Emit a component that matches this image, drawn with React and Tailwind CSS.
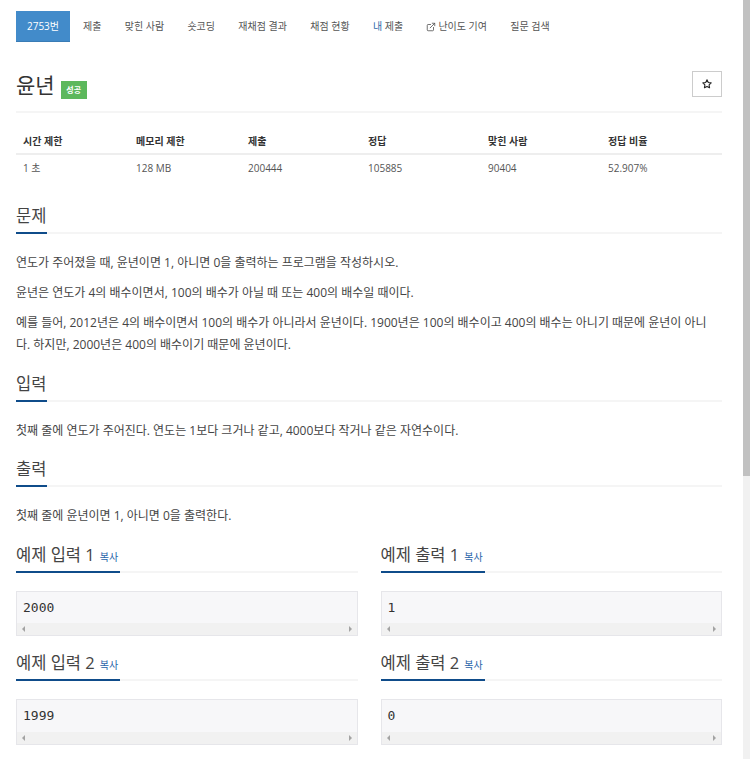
import React from 'react';
import { FiExternalLink, FiStar } from 'react-icons/fi';

const fontStack = "font-['Open_Sans','Noto_Sans_CJK_KR',sans-serif]";

const tabs = ['제출', '맞힌 사람', '숏코딩', '재채점 결과', '채점 현황'];

const stats = [
  { label: '시간 제한', value: '1 초', width: 'w-[113px]' },
  { label: '메모리 제한', value: '128 MB', width: 'w-[112px]' },
  { label: '제출', value: '200444', width: 'w-[120px]' },
  { label: '정답', value: '105885', width: 'w-[120px]' },
  { label: '맞힌 사람', value: '90404', width: 'w-[120px]' },
  { label: '정답 비율', value: '52.907%', width: 'flex-1' },
];

const SectionTitle = ({ children }) => (
  <div className="border-b-2 border-[#f5f5f5] h-[26px] text-[16.5px] leading-[16px] text-[#444]">
    <span className="inline-block w-[31px] h-[26px] whitespace-nowrap border-b-2 border-[#0f4c8a]">{children}</span>
  </div>
);

const Sample = ({ title, value, boxHeight }) => (
  <div className="flex-1 min-w-0">
    <div className="flex border-b-2 border-[#f5f5f5] h-[28px]">
      <div className="flex items-baseline w-[104px] h-[28px] whitespace-nowrap border-b-2 border-[#0f4c8a] text-[16.5px] leading-[20px] text-[#444]">
        {title}
        <span className="ml-[5px] text-[10px] text-[#1f62a8]">복사</span>
      </div>
    </div>
    <div className={`mt-[18px] ${boxHeight} border border-[#e6e6ea] bg-[#f7f7f9] flex flex-col`}>
      <pre className="flex-1 px-[6px] pt-[8px] font-['DejaVu_Sans_Mono',monospace] text-[13px] leading-[16px] text-[#333]">{value}</pre>
      <div className="h-[12px] bg-[#f1f1f1] flex items-center justify-between px-[5px]">
        <span className="border-y-[3px] border-r-[3px] border-y-transparent border-r-[#a3a3a3]" />
        <span className="border-y-[3px] border-l-[3px] border-y-transparent border-l-[#a3a3a3]" />
      </div>
    </div>
  </div>
);

const App = () => {
  return (
    <div className={`flex h-[759px] w-[750px] overflow-hidden bg-white text-[#333] ${fontStack}`}>
      <div className="w-[743px] px-[16px] pt-[11px]">
        {/* tabs */}
        <div className="w-[706px] flex items-center h-[31px] text-[10px] text-[#555]">
          <div className="w-[54px] h-[31px] flex items-center justify-center bg-[#428bca] text-white border-b border-[#3a7cb5]">2753번</div>
          <div className="ml-[13px] flex gap-[23.3px]">
            {tabs.map((tab) => (
              <span key={tab}>{tab}</span>
            ))}
            <span><span className="text-[#2c6aa8]">내</span> 제출</span>
            <span className="flex items-center">
              <FiExternalLink className="w-[10px] h-[10px] mr-[2px]" />
              난이도 기여
            </span>
            <span>질문 검색</span>
          </div>
        </div>

        {/* title */}
        <div className="w-[706px] mt-[30px] h-[41px] border-b-2 border-[#f5f5f5] flex justify-between">
          <div className="flex items-start">
            <h1 className="text-[21px] leading-[28px] font-normal -mt-[1px]">윤년</h1>
            <span className="ml-[6px] mt-[9px] w-[26px] h-[18px] flex items-center justify-center bg-[#5cb85c] text-white text-[8px] font-bold">성공</span>
          </div>
          <button className="w-[30px] h-[26px] -mt-[1px] border border-[#ccc] flex items-center justify-center text-[#222]">
            <FiStar className="w-[10px] h-[10px]" strokeWidth={2.6} />
          </button>
        </div>

        {/* stats */}
        <div className="w-[706px] mt-[16px]">
          <div className="flex h-[26px] border-b-2 border-[#eee] text-[10px] font-bold items-center">
            {stats.map((s) => (
              <div key={s.label} className={`${s.width} pl-[7px]`}>{s.label}</div>
            ))}
          </div>
          <div className="flex h-[26px] text-[10px] text-[#555] items-center">
            {stats.map((s) => (
              <div key={s.label} className={`${s.width} pl-[7px]`}>{s.value}</div>
            ))}
          </div>
        </div>

        {/* problem */}
        <div className="w-[706px] mt-[27px]">
          <SectionTitle>문제</SectionTitle>
          <div className="mt-[18px] text-[12px] leading-[22px] text-[#444]">
            <p>연도가 주어졌을 때, 윤년이면 1, 아니면 0을 출력하는 프로그램을 작성하시오.</p>
            <p className="mt-[8px]">윤년은 연도가 4의 배수이면서, 100의 배수가 아닐 때 또는 400의 배수일 때이다.</p>
            <p className="mt-[8px] w-[695px] break-all">예를 들어, 2012년은 4의 배수이면서 100의 배수가 아니라서 윤년이다. 1900년은 100의 배수이고 400의 배수는 아니기 때문에 윤년이 아니다. 하지만, 2000년은 400의 배수이기 때문에 윤년이다.</p>
          </div>
        </div>

        <div className="w-[706px] mt-[20px]">
          <SectionTitle>입력</SectionTitle>
          <p className="mt-[18px] text-[12px] leading-[22px] text-[#444]">첫째 줄에 연도가 주어진다. 연도는 1보다 크거나 같고, 4000보다 작거나 같은 자연수이다.</p>
        </div>

        <div className="w-[706px] mt-[19px]">
          <SectionTitle>출력</SectionTitle>
          <p className="mt-[18px] text-[12px] leading-[22px] text-[#444]">첫째 줄에 윤년이면 1, 아니면 0을 출력한다.</p>
        </div>

        {/* samples */}
        <div className="w-[706px] mt-[18px] flex gap-[23px]">
          <Sample title="예제 입력 1" value="2000" boxHeight="h-[45px]" />
          <Sample title="예제 출력 1" value="1" boxHeight="h-[45px]" />
        </div>
        <div className="w-[706px] mt-[17px] flex gap-[23px]">
          <Sample title="예제 입력 2" value="1999" boxHeight="h-[46px]" />
          <Sample title="예제 출력 2" value="0" boxHeight="h-[46px]" />
        </div>
      </div>

      {/* page scrollbar */}
      <div className="w-[7px] h-full bg-[#f1f1f1]">
        <div className="h-[476px] bg-[#c1c1c1]" />
      </div>
    </div>
  );
};

export default App;
